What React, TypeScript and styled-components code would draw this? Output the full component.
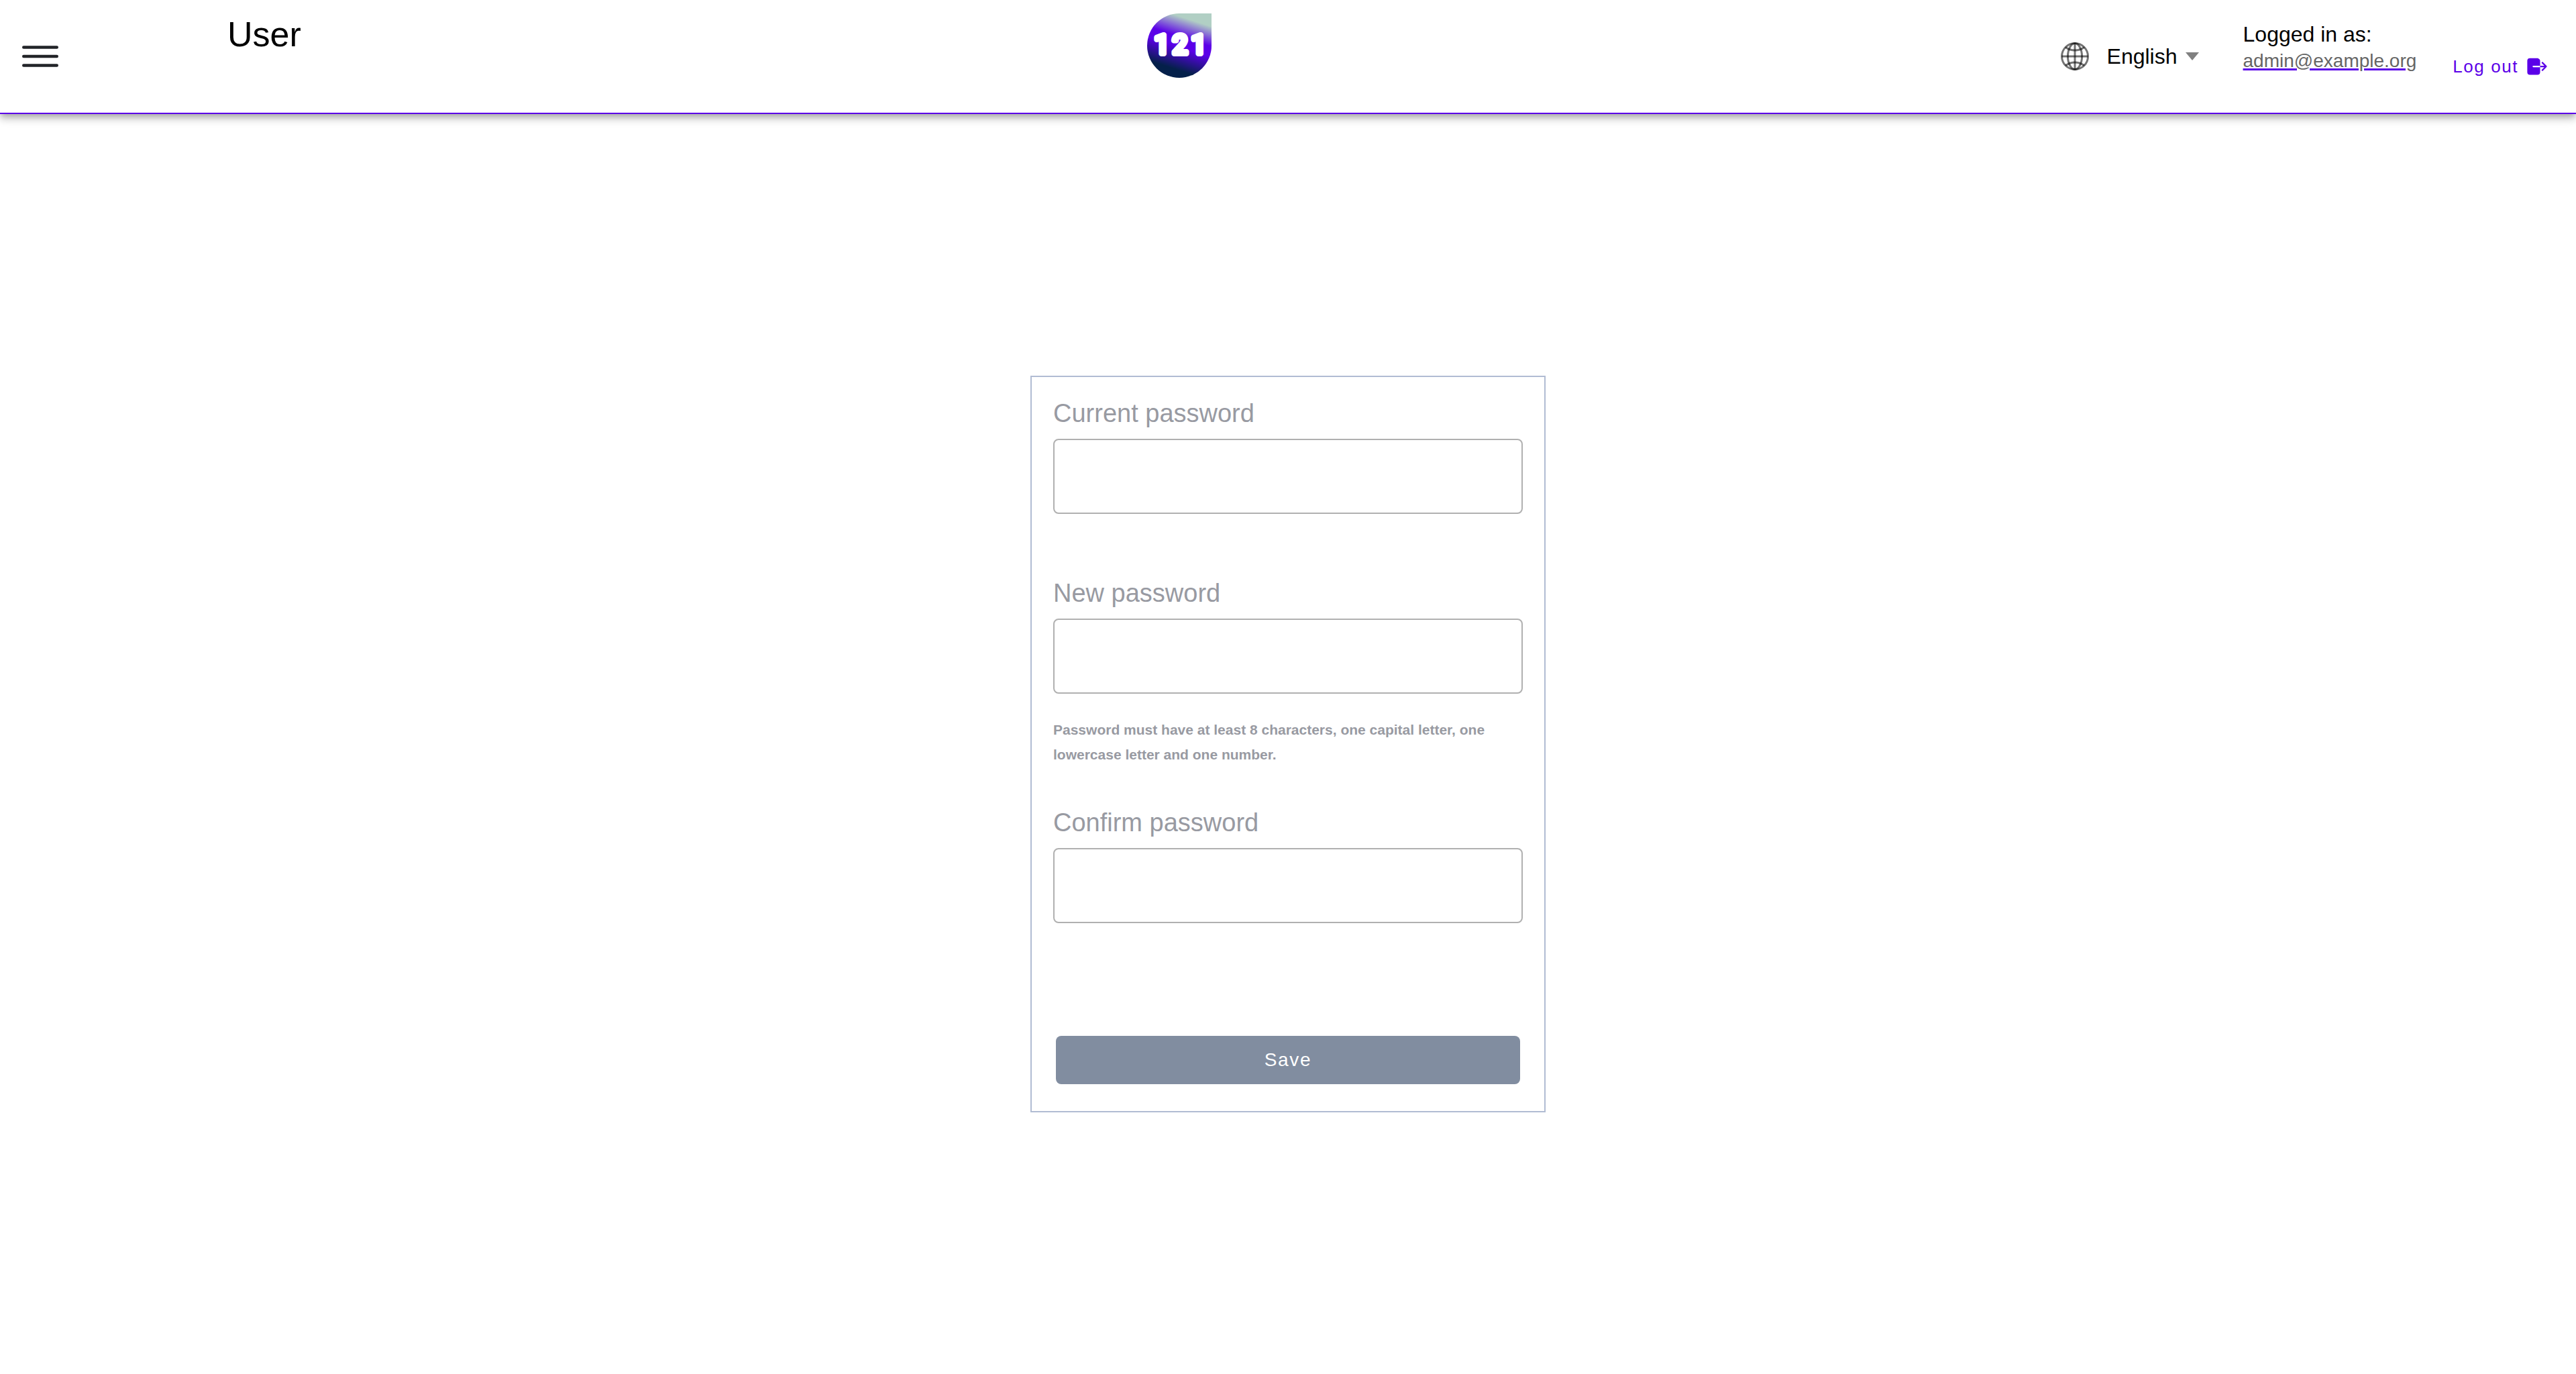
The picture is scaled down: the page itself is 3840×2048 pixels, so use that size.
import React from 'react';
import styled, { createGlobalStyle } from 'styled-components';
import { IoLogOut } from 'react-icons/io5';

const purple = '#5b00e8';

const GlobalStyle = createGlobalStyle`
  *, *::before, *::after { box-sizing: border-box; }
  body {
    margin: 0;
    background: #fff;
    color: #000;
    font-family: "Liberation Sans", Arial, sans-serif;
  }
  button, input, select { font-family: inherit; }
`;

const Page = styled.div`
  display: flex;
  flex-direction: column;
  min-height: 100vh;
`;

const Header = styled.header`
  display: grid;
  grid-template-columns: 315px 11fr 96px 16fr;
  align-items: start;
  min-height: 170px;
  padding: 20px 40px 20px 24px;
  background: #fff;
  border-bottom: 2px solid ${purple};
  box-shadow: 0 4px 8px -2px rgba(0, 0, 0, 0.2), 0 8px 10px 0 rgba(0, 0, 0, 0.14),
    0 2px 20px 0 rgba(0, 0, 0, 0.12);
`;

const MenuButton = styled.button`
  align-self: center;
  justify-self: start;
  display: flex;
  padding: 0;
  border: 0;
  background: none;
  cursor: pointer;
`;

const Title = styled.h1`
  margin: 0;
  font-size: 52px;
  font-weight: 400;
  line-height: 62px;
`;

const Tools = styled.div`
  display: flex;
  justify-content: flex-end;
  align-items: flex-start;
`;

const Language = styled.label`
  display: flex;
  align-items: center;
  gap: 24px;
  margin-right: 66px;
  padding-top: 40px;
`;

const SelectWrap = styled.span`
  display: flex;
  align-items: center;
  gap: 12px;
`;

const Select = styled.select`
  appearance: none;
  height: 48px;
  padding: 0;
  border: 0;
  background: none;
  color: #000;
  font-size: 32px;
  line-height: 48px;
  cursor: pointer;
`;

const Caret = styled.span`
  border: 10px solid transparent;
  border-top: 12px solid #808080;
  border-bottom: 0;
`;

const Account = styled.div`
  display: flex;
  flex-direction: column;
  margin-right: 54px;
  padding-top: 12px;
  font-size: 32px;
  line-height: 39px;
`;

const AccountLink = styled.a`
  color: #666;
  font-size: 28px;
  text-decoration: underline 3px ${purple};
`;

const LogoutButton = styled.button`
  display: flex;
  align-items: center;
  gap: 10px;
  margin-top: 59px;
  padding: 0;
  border: 0;
  background: none;
  color: ${purple};
  font-size: 26px;
  line-height: 40px;
  letter-spacing: 0.06em;
  cursor: pointer;

  svg { width: 36px; height: 36px; }
`;

const Main = styled.main`
  flex: 1;
  display: flex;
  justify-content: center;
  align-items: center;
`;

const Card = styled.form`
  display: flex;
  flex-direction: column;
  width: 20%;
  min-width: 600px;
  padding: 32px;
  border: 2px solid #b1bcd3;
`;

const Field = styled.div<{ $space: number }>`
  display: flex;
  flex-direction: column;
  margin-bottom: ${({ $space }) => $space}px;
`;

const Label = styled.label`
  margin-bottom: 16px;
  color: #989aa2;
  font-size: 38px;
  line-height: 44px;
`;

const Input = styled.input`
  width: 100%;
  height: 112px;
  padding: 0 24px;
  border: 2px solid #b0b0b0;
  border-radius: 8px;
  background: #fff;
  font-size: 38px;
`;

const Hint = styled.p`
  margin: 35px 0 0;
  color: #989aa2;
  font-size: 21px;
  font-weight: 700;
  line-height: 37px;
`;

const SaveButton = styled.button`
  height: 72px;
  margin: 8px 4px;
  border: 0;
  border-radius: 8px;
  background: #818da0;
  color: #fff;
  font-size: 28px;
  letter-spacing: 0.06em;
  cursor: pointer;
`;

const MenuIcon = () => (
  <svg width="72" height="72" viewBox="0 0 512 512" fill="none" stroke="#222428" strokeWidth="32" strokeLinecap="round" aria-hidden="true">
    <path d="M80 160h352M80 256h352M80 352h352" />
  </svg>
);

const GlobeIcon = () => (
  <svg width="48" height="48" viewBox="0 0 512 512" fill="none" stroke="#000" strokeOpacity="0.55" strokeWidth="32" aria-hidden="true">
    <path d="M256 48C141.13 48 48 141.13 48 256s93.13 208 208 208 208-93.13 208-208S370.87 48 256 48z" />
    <path d="M256 48c-58.07 0-112.67 93.13-112.67 208S197.93 464 256 464s112.67-93.13 112.67-208S314.07 48 256 48z" />
    <path strokeLinecap="round" d="M117.33 117.33c38.24 27.15 86.38 43.34 138.67 43.34s100.43-16.19 138.67-43.34M394.67 394.67c-38.24-27.15-86.38-43.34-138.67-43.34s-100.43 16.19-138.67 43.34" />
    <path d="M256 48v416" />
    <path d="M464 256H48" />
  </svg>
);

const Logo = () => (
  <svg width="96" height="96" viewBox="0 0 96 96" role="img" aria-label="121">
    <defs>
      <linearGradient id="drop" gradientUnits="userSpaceOnUse" x1="64" y1="0" x2="34" y2="94">
        <stop offset="0.09" stopColor="#b1cfc4" />
        <stop offset="0.38" stopColor="#5b00e8" />
        <stop offset="0.53" stopColor="#5b00e8" />
        <stop offset="0.87" stopColor="#04204a" />
      </linearGradient>
    </defs>
    <path d="M48 0H96V48A48 48 0 1 1 48 0Z" fill="url(#drop)" />
    <g fill="#fff" stroke="#fff" strokeWidth="8" strokeLinejoin="round" strokeLinecap="round" fontFamily="Roboto, sans-serif" fontWeight="400" fontSize="39" textAnchor="middle">
      <text x="22" y="60">1</text>
      <text x="49" y="60">2</text>
      <text x="77" y="60">1</text>
    </g>
  </svg>
);

const fields = [
  { id: 'current', label: 'Current password', space: 96 },
  {
    id: 'new',
    label: 'New password',
    space: 61,
    hint: 'Password must have at least 8 characters, one capital letter, one lowercase letter and one number.',
  },
  { id: 'confirm', label: 'Confirm password', space: 160 },
];

export default function App() {
  return (
    <Page>
      <GlobalStyle />
      <Header>
        <MenuButton type="button" aria-label="Menu">
          <MenuIcon />
        </MenuButton>
        <Title>User</Title>
        <Logo />
        <Tools>
          <Language>
            <GlobeIcon />
            <SelectWrap>
              <Select aria-label="Language">
                <option>English</option>
              </Select>
              <Caret />
            </SelectWrap>
          </Language>
          <Account>
            <span>Logged in as:</span>
            <AccountLink href="#user">admin@example.org</AccountLink>
          </Account>
          <LogoutButton type="button">
            Log out
            <IoLogOut aria-hidden="true" />
          </LogoutButton>
        </Tools>
      </Header>
      <Main>
        <Card onSubmit={(event) => event.preventDefault()}>
          {fields.map(({ id, label, space, hint }) => (
            <Field key={id} $space={space}>
              <Label htmlFor={id}>{label}</Label>
              <Input id={id} type="password" aria-describedby={hint ? `${id}-hint` : undefined} />
              {hint && <Hint id={`${id}-hint`}>{hint}</Hint>}
            </Field>
          ))}
          <SaveButton type="submit">Save</SaveButton>
        </Card>
      </Main>
    </Page>
  );
}
